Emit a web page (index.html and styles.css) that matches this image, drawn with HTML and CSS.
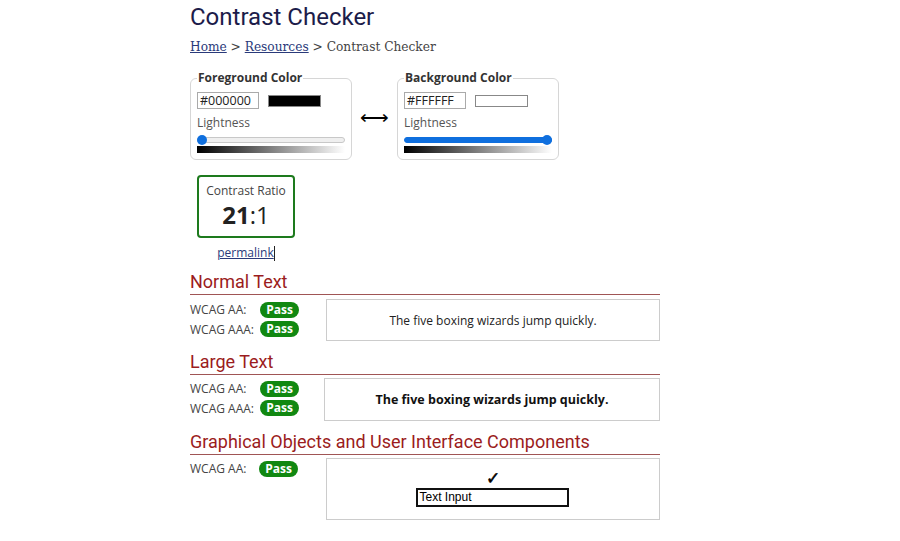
FILE: index.html
```html
<!DOCTYPE html>
<html>
<head>
<meta charset="utf-8">
<link rel="stylesheet" href="styles.css">
</head>
<body>
<main class="page">
  <h1 class="title">Contrast Checker</h1>
  <nav class="crumbs"><a href="#">Home</a> &gt; <a href="#">Resources</a> &gt; Contrast Checker</nav>

  <div class="pickers">
    <fieldset class="picker">
      <legend>Foreground Color</legend>
      <div class="colorrow">
        <div class="hex">#000000</div>
        <div class="swatch swatch-black"></div>
      </div>
      <div class="lbl">Lightness</div>
      <div class="slider">
        <div class="track"></div>
        <div class="thumb thumb-left"></div>
      </div>
      <div class="grad"></div>
    </fieldset>
    <div class="swap">⟷</div>
    <fieldset class="picker picker-bg">
      <legend>Background Color</legend>
      <div class="colorrow">
        <div class="hex">#FFFFFF</div>
        <div class="swatch swatch-white"></div>
      </div>
      <div class="lbl">Lightness</div>
      <div class="slider">
        <div class="track track-full"></div>
        <div class="thumb thumb-right"></div>
      </div>
      <div class="grad"></div>
    </fieldset>
  </div>

  <div class="ratio-wrap">
    <div class="ratio">
      <div class="ratio-lbl">Contrast Ratio</div>
      <div class="ratio-val"><b>21</b>:1</div>
    </div>
    <div class="perma"><a href="#">permalink</a><span class="caret"></span></div>
  </div>

  <section class="sec sec-first">
    <h2 class="sec-h">Normal Text</h2>
    <div class="sec-body">
      <div class="results">
        <div class="res"><span class="res-l">WCAG AA:</span><span class="pass">Pass</span></div>
        <div class="res"><span class="res-l">WCAG AAA:</span><span class="pass">Pass</span></div>
      </div>
      <div class="sample sample-normal">The five boxing wizards jump quickly.</div>
    </div>
  </section>

  <section class="sec">
    <h2 class="sec-h">Large Text</h2>
    <div class="sec-body">
      <div class="results">
        <div class="res"><span class="res-l">WCAG AA:</span><span class="pass">Pass</span></div>
        <div class="res"><span class="res-l">WCAG AAA:</span><span class="pass">Pass</span></div>
      </div>
      <div class="sample sample-large">The five boxing wizards jump quickly.</div>
    </div>
  </section>

  <section class="sec">
    <h2 class="sec-h">Graphical Objects and User Interface Components</h2>
    <div class="sec-body">
      <div class="results">
        <div class="res"><span class="res-l">WCAG AA:</span><span class="pass pass-ui">Pass</span></div>
      </div>
      <div class="sample sample-ui">
        <div class="check">✓</div>
        <div class="tinput">Text Input</div>
      </div>
    </div>
  </section>
</main>
</body>
</html>
```
FILE: styles.css
```css
* { box-sizing: border-box; }
html, body { margin: 0; padding: 0; background: #fff; }
body { font-family: "Open Sans", sans-serif; color: #333; }

.page { width: 470px; margin-left: 190px; padding-top: 2px; }

.title {
  font-family: Roboto, sans-serif;
  font-weight: 400;
  font-size: 24px;
  line-height: 30px;
  color: #1c1c4a;
  margin: 0;
}

.crumbs {
  font-family: "DejaVu Serif", serif;
  font-size: 12.2px;
  line-height: 16px;
  color: #444;
  margin-top: 7px;
}
.crumbs a { color: #2a3a7a; }

.pickers { display: flex; align-items: flex-start; margin-top: 16px; }

.picker {
  width: 162px;
  margin: 0;
  border: 1px solid #d6d6d6;
  border-radius: 6px;
  padding: 0 6px 6px 6px;
}
.picker-bg { width: 161px; }
.picker legend {
  font-weight: 700;
  font-size: 12px;
  color: #333;
  padding: 0 1px;
  margin-left: 0;
  line-height: 14px;
}

.colorrow { display: flex; align-items: center; gap: 9px; margin-top: 7px; }
.hex {
  width: 62px;
  height: 17px;
  border: 1px solid #aaa;
  font-size: 12.5px;
  line-height: 15px;
  padding-left: 2px;
  color: #222;
}
.swatch { width: 53px; height: 12px; border: 1px solid #888; }
.swatch-black { background: #000; }
.swatch-white { background: #fff; }

.lbl { font-size: 12px; line-height: 16px; color: #555; margin-top: 6px; }

.slider { position: relative; height: 12px; margin-top: 3px; width: 148px; }
.track {
  position: absolute; left: 0; right: 0; top: 3px; height: 6px;
  border: 1px solid #c8c8c8; background: #efefef; border-radius: 3px;
}
.track-full { background: #0f6fde; border-color: #0f6fde; }
.thumb {
  position: absolute; top: 1px; width: 10px; height: 10px; border-radius: 50%;
  background: #0f6fde;
}
.thumb-left { left: 0; }
.thumb-right { right: 0; }

.grad {
  width: 148px; height: 7px; margin-top: 0;
  background: linear-gradient(to right, #000, #fff);
}

.swap {
  width: 45px;
  text-align: center;
  font-size: 20px;
  line-height: 20px;
  margin-top: 36px;
  color: #000;
}

.ratio-wrap {
  width: 98px;
  margin-left: 7px;
  margin-top: 15px;
  display: flex;
  flex-direction: column;
  align-items: center;
}
.ratio {
  width: 98px; height: 63px;
  border: 2px solid #1d7a1d;
  border-radius: 4px;
  text-align: center;
  padding-top: 6px;
}
.ratio-lbl { font-size: 12px; line-height: 16px; color: #444; }
.ratio-val { font-size: 24px; line-height: 30px; color: #222; margin-top: 1px; }
.ratio-val b { font-weight: 700; }

.perma { font-size: 12px; line-height: 16px; margin-top: 7px; display: flex; align-items: center; }
.perma a { color: #2a3a7a; }
.caret { display: inline-block; width: 1px; height: 15px; background: #222; }

.sec-h {
  font-family: Roboto, sans-serif;
  font-weight: 400;
  font-size: 18px;
  line-height: 22px;
  color: #9b1c20;
  margin: 10px 0 0 0;
  padding-bottom: 1px;
  border-bottom: 1px solid #a05555;
}

.sec-body { display: flex; align-items: flex-start; margin-top: 3px; }
.sec-first .sec-body { margin-top: 4px; }
.results { width: 136px; padding-top: 1px; }
.res { display: flex; align-items: center; height: 19.5px; }
.res-l { width: 70px; font-size: 12px; color: #444; }
.pass {
  background: #118811;
  color: #fff;
  font-weight: 700;
  font-size: 12px;
  line-height: 16px;
  border-radius: 8px;
  width: 39px;
  text-align: center;
}
.pass-ui { margin-left: -1px; }

.sample {
  flex: 1;
  border: 1px solid #ccc;
  display: flex;
  align-items: center;
  justify-content: center;
  color: #222;
}
.sample-normal { height: 42px; font-size: 12px; }
.sample-large { height: 43px; font-size: 12.5px; font-weight: 700; color: #111; margin-left: -2px; }
.sample-ui { height: 62px; flex-direction: column; justify-content: flex-start; padding-top: 9px; }
.check {
  font-family: "DejaVu Sans", sans-serif;
  font-size: 17px;
  line-height: 20px;
  color: #000;
  -webkit-text-stroke: 0.6px #000;
}
.tinput {
  width: 153px; height: 19px;
  border: 2px solid #111;
  font-family: "Liberation Sans", Arial, sans-serif;
  font-size: 12px;
  line-height: 15px;
  padding-left: 2px;
  color: #000;
  margin-left: -2px;
}
```
